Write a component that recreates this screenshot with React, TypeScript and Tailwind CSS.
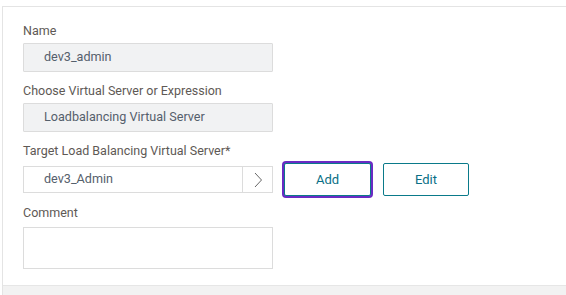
import React from 'react';

const font = { fontFamily: 'Roboto, "Liberation Sans", sans-serif' };

const Label: React.FC<{ children: React.ReactNode; className?: string }> = ({ children, className = '' }) => (
  <div className={`text-[12.5px] leading-4 text-[#5e5955] ${className}`}>{children}</div>
);

const ReadOnlyField: React.FC<{ value: string; className?: string }> = ({ value, className = '' }) => (
  <div
    className={`w-[250px] h-[29px] flex items-center pl-[20px] bg-[#f1f2f3] border border-[#dcdcdc] rounded-[1px] text-[12.6px] text-[#55606c] ${className}`}
  >
    {value}
  </div>
);

export default function App() {
  return (
    <div className="w-[566px] h-[295px] bg-white pt-[6px] pl-[2px] overflow-hidden" style={font}>
      <div className="h-[289px] border-l border-t border-[#e4e4e4] flex flex-col">
        {/* Form */}
        <div className="h-[278px] pl-[20px] pt-[16px]">
          <Label>Name</Label>
          <ReadOnlyField value="dev3_admin" className="mt-[4px]" />

          <Label className="mt-[11px]">Choose Virtual Server or Expression</Label>
          <ReadOnlyField value="Loadbalancing Virtual Server" className="mt-[4px]" />

          <Label className="mt-[11px]">Target Load Balancing Virtual Server*</Label>
          <div className="mt-[2px] h-[37px] flex items-center">
            <div className="w-[250px] h-[27px] flex border border-[#dcdcdc] bg-white">
              <div className="flex-1 flex items-center pl-[20px] text-[12.6px] text-[#55606c]">dev3_Admin</div>
              <div className="w-[30px] border-l border-[#dcdcdc] flex items-center justify-center">
                <svg width="8" height="16" viewBox="0 0 8 16" fill="none">
                  <path d="M1 1l6.5 7L1 15" stroke="#666" strokeWidth="1" />
                </svg>
              </div>
            </div>
            <button className="ml-[11px] w-[87px] h-[33px] border border-[#0a7a8a] rounded-[2px] ring-2 ring-[#6a2bc4] text-[13px] text-[#0a6f86] bg-white">
              Add
            </button>
            <button className="ml-[12px] w-[86px] h-[33px] border border-[#0a7a8a] rounded-[2px] text-[13px] text-[#0a6f86] bg-white">
              Edit
            </button>
          </div>

          <Label className="mt-[7px]">Comment</Label>
          <div className="mt-[6px] w-[250px] h-[42px] border border-[#dcdcdc] bg-white" />
        </div>
        {/* Footer strip */}
        <div className="flex-1 bg-[#f2f2f2] border-t border-[#e6e6e6]" />
      </div>
    </div>
  );
}
